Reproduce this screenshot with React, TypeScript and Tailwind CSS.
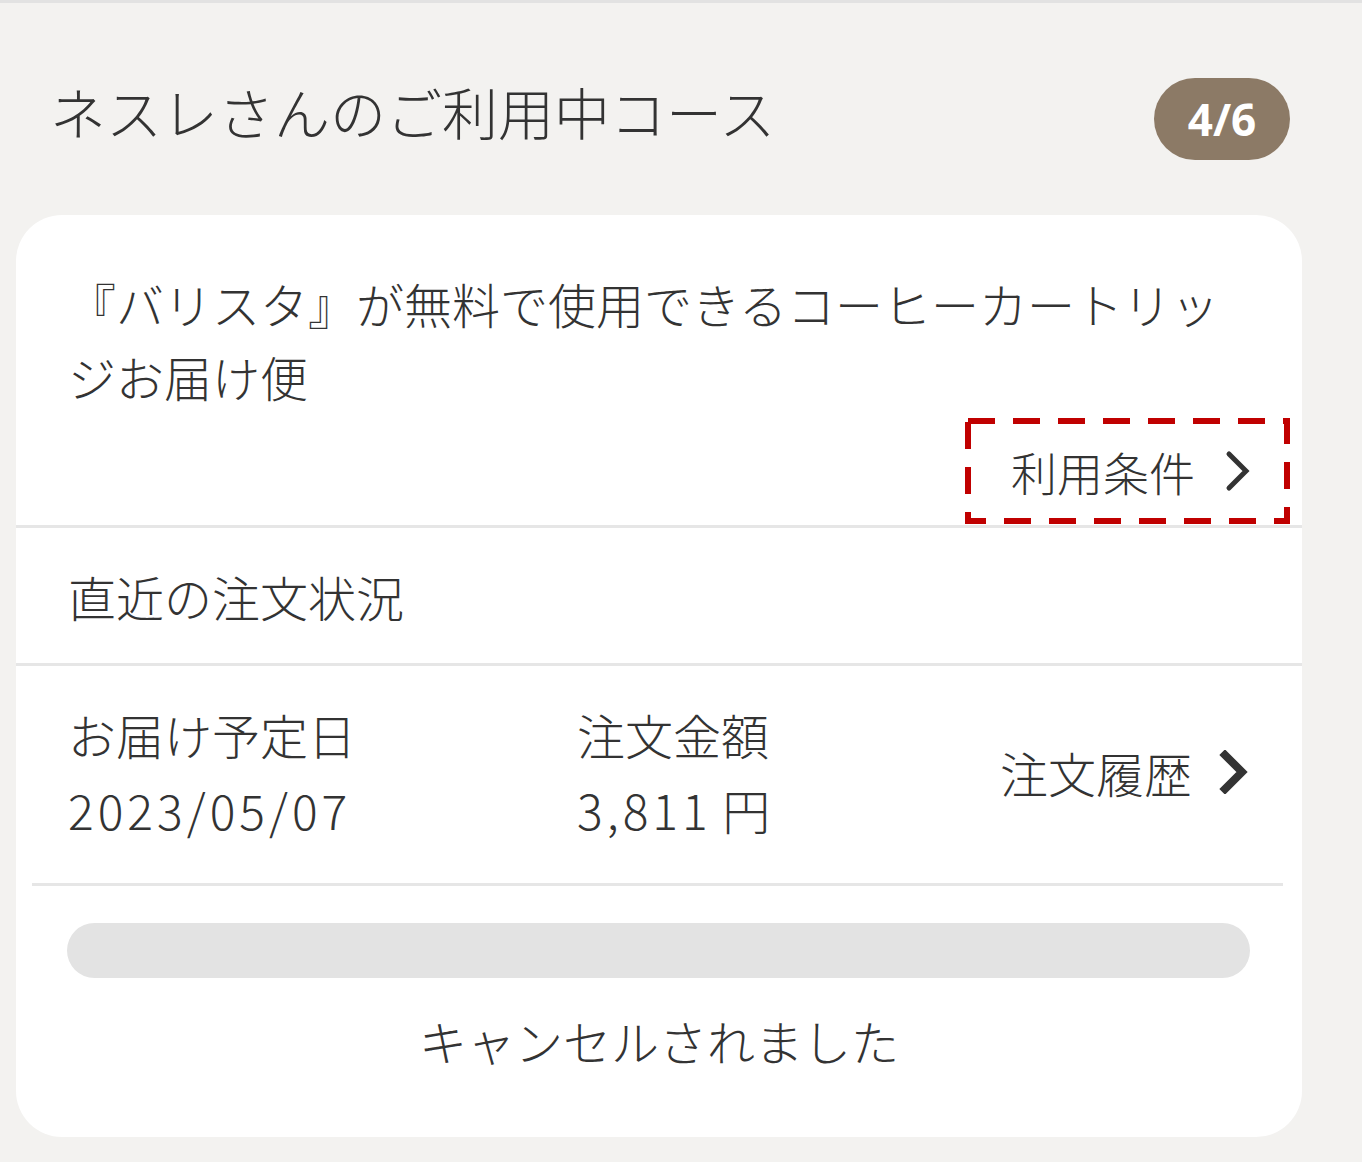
import React from "react";

const jp = { fontFamily: '"Noto Sans CJK JP", "Noto Sans", sans-serif' };

function Chevron({ bold = false }: { bold?: boolean }) {
  return (
    <svg width="30" height="44" viewBox="0 0 30 44" className="shrink-0">
      <path
        d="M7 5 L24 22 L7 39"
        fill="none"
        stroke="#333"
        strokeWidth={bold ? 8 : 5}
        strokeLinecap={bold ? "square" : "round"}
        strokeLinejoin="miter"
      />
    </svg>
  );
}

export default function App() {
  return (
    <div
      className="w-[1362px] h-[1162px] bg-[#f3f2f0] border-t-[3px] border-[#e2e2e2] overflow-hidden text-[#333]"
      style={jp}
    >
      {/* header */}
      <div className="flex items-center justify-between pl-[50px] pr-[72px] pt-[75px] h-[212px] pb-[55px]">
        <h1 className="text-[56px] leading-[80px] font-light mb-[16px]">ネスレさんのご利用中コース</h1>
        <div className="w-[136px] h-[82px] rounded-full bg-[#8c7a66] flex items-center justify-center">
          <span className="text-white text-[44px] font-bold leading-none" style={{ fontFamily: '"Open Sans", sans-serif' }}>
            4/6
          </span>
        </div>
      </div>

      {/* card */}
      <div className="ml-[16px] w-[1286px] h-[922px] bg-white rounded-[46px] flex flex-col">
        {/* course */}
        <div className="pt-[52px] pl-[52px] pr-[52px] flex flex-col">
          <p className="text-[48px] leading-[73px] font-light">
            『バリスタ』が無料で使用できるコーヒーカートリッジお届け便
          </p>
        </div>
        <div className="flex justify-end pr-[12px] pt-[5px] h-[112px]">
          <div className="relative w-[325px] h-[106px] flex items-center pl-[46px] gap-[27px]">
            <svg className="absolute inset-0" width="325" height="106" viewBox="0 0 325 106">
              <rect
                x="3"
                y="3"
                width="319"
                height="100"
                fill="none"
                stroke="#c00000"
                strokeWidth="6"
                strokeDasharray="27 18"
              />
            </svg>
            <span className="text-[46px] leading-[60px] font-light">利用条件</span>
            <Chevron />
          </div>
        </div>
        <div className="h-[3px] bg-[#e6e6e6]" />

        {/* status title */}
        <div className="h-[135px] flex items-center pl-[52px]">
          <span className="text-[48px] leading-[60px] font-light">直近の注文状況</span>
        </div>
        <div className="h-[3px] bg-[#e6e6e6]" />

        {/* order row */}
        <div className="h-[217px] flex items-center pl-[52px] pr-[54px] pb-[6px]">
          <div className="w-[509px] flex flex-col">
            <span className="text-[48px] leading-[75px] font-light">お届け予定日</span>
            <span className="text-[48px] leading-[75px] font-light tracking-[4px]">2023/05/07</span>
          </div>
          <div className="flex flex-col">
            <span className="text-[48px] leading-[75px] font-light">注文金額</span>
            <span className="text-[48px] leading-[75px] font-light">
              <span className="tracking-[4px]">3,811</span> 円
            </span>
          </div>
          <div className="ml-auto flex items-center gap-[26px]">
            <span className="text-[48px] leading-[60px] font-light">注文履歴</span>
            <Chevron bold />
          </div>
        </div>
        <div className="ml-[16px] mr-[19px] h-[3px] bg-[#e6e6e6]" />

        {/* progress + status */}
        <div className="pt-[37px] pl-[51px] pr-[52px]">
          <div className="h-[55px] rounded-full bg-[#e3e3e3]" />
        </div>
        <div className="flex justify-center pt-[32px]">
          <span className="text-[48px] leading-[60px] font-light">キャンセルされました</span>
        </div>
      </div>
    </div>
  );
}
